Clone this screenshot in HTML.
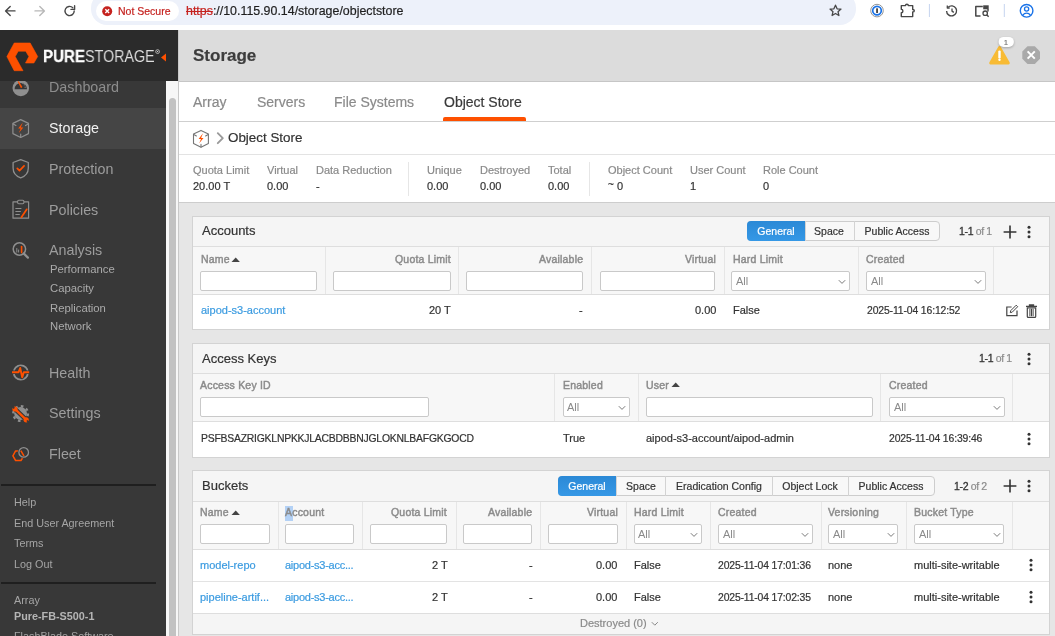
<!DOCTYPE html>
<html><head><meta charset="utf-8"><style>
*{box-sizing:border-box;margin:0;padding:0}
html,body{width:1055px;height:636px;overflow:hidden;-webkit-font-smoothing:antialiased;background:#e6e6e6;font-family:"Liberation Sans",sans-serif;position:relative}
.a{position:absolute}
.t{position:absolute;white-space:nowrap;line-height:1;will-change:transform;-webkit-text-stroke:0.2px currentColor}
svg{position:absolute;overflow:visible}
.inp{position:absolute;background:#fff;border:1px solid #c9c9c9;border-radius:2px}
.sel{position:absolute;background:#fff;border:1px solid #c9c9c9;border-radius:2px}
</style></head><body>
<div class="a" style="left:0px;top:0px;width:1055px;height:30px;background:#fff;"></div>
<div class="a" style="left:91px;top:-8px;width:765px;height:33px;background:#edf1fa;border-radius:16px;"></div>
<div class="a" style="left:96px;top:1px;width:83px;height:20px;background:#fff;border-radius:10px;"></div>
<svg style="left:0;top:0" width="90" height="30"><g fill="none" stroke-linecap="round" stroke-linejoin="round" stroke-width="1.4"><path d="M15 10.9H5.8M10.2 6.4L5.6 10.9l4.6 4.6" stroke="#474747"/><path d="M35 10.9h9.2M39.8 6.4l4.6 4.5-4.6 4.6" stroke="#b8b8b8"/><path d="M74.2 11a4.6 4.6 0 1 1-1.4-3.3" stroke="#474747"/><path d="M74.6 5.8v3.6h-3.6" stroke="#474747"/></g></svg>
<svg style="left:102px;top:6px" width="11" height="11"><circle cx="5.2" cy="5.2" r="5" fill="#c5221f"/><path d="M3.3 3.3l3.8 3.8M7.1 3.3L3.3 7.1" stroke="#fff" stroke-width="1.4"/></svg>
<div class="t" style="top:5.71px;font-size:10.5px;color:#c5221f;left:117.5px;">Not Secure</div>
<div class="t" style="left:186px;top:5.4px;font-size:12.4px;color:#1f1f1f"><span style="color:#c5221f;text-decoration:line-through">https</span>://10.115.90.14/storage/objectstore</div>
<svg style="left:820px;top:0" width="235" height="30" fill="none" stroke-linejoin="round"><path d="M15.5 5.2l1.6 3.6 3.9.3-3 2.6.9 3.8-3.4-2-3.4 2 .9-3.8-3-2.6 3.9-.3z" stroke="#474747" stroke-width="1.3"/><circle cx="57" cy="10.6" r="6.3" fill="#fff" stroke="#8a8a8a" stroke-width="0.9"/><circle cx="57" cy="10.6" r="4.3" fill="#fff" stroke="#1a73e8" stroke-width="1.7"/><rect x="56.3" y="8.2" width="1.5" height="4.9" rx=".4" fill="#1a1a1a"/><path d="M81.3 5.6h4.2a1.4 1.4 0 0 1 2.8 0h4.4v3.9c1.2 0 1.6.6 1.6 1.2s-.4 1.2-1.6 1.2v4.7H81.3v-3.8c1.2 0 1.6-.8 1.6-1.8s-.4-1.8-1.6-1.8z" stroke="#474747" stroke-width="1.4"/><path d="M109.4 4v13" stroke="#c5d4ef" stroke-width="1"/><path d="M126.6 10.9a5 5 0 1 0 1.5-3.6" stroke="#474747" stroke-width="1.4"/><path d="M127.3 5.6v2.4h2.4M132 8.5v2.6l1.8 1.3" stroke="#474747" stroke-width="1.3"/><path d="M160.5 15.9h-4.7V6.4h7" stroke="#474747" stroke-width="1.5"/><rect x="163.2" y="5.3" width="5.5" height="4" fill="#474747"/><path d="M168 9v2.5" stroke="#474747" stroke-width="1.4"/><circle cx="165.2" cy="13.2" r="2.2" stroke="#474747" stroke-width="1.3"/><path d="M166.8 14.8l1.8 1.9" stroke="#474747" stroke-width="1.4"/><path d="M184.3 4v13" stroke="#c5d4ef" stroke-width="1"/><circle cx="206.6" cy="10.8" r="6.3" stroke="#1a73e8" stroke-width="1.4"/><circle cx="206.6" cy="9" r="2.1" stroke="#1a73e8" stroke-width="1.3"/><path d="M202.6 15.4c1.2-1.6 2.4-2.2 4-2.2s2.8.6 4 2.2" stroke="#1a73e8" stroke-width="1.3"/></svg>
<div class="a" style="left:0px;top:81px;width:166px;height:555px;background:#383838;"></div>
<div class="a" style="left:166px;top:81px;width:12px;height:555px;background:#f7f7f7;"></div>
<div class="a" style="left:169px;top:98px;width:7px;height:560px;background:#c2c2c2;border-radius:4px;"></div>
<div class="a" style="left:0px;top:108px;width:166px;height:41px;background:#454545;"></div>
<div class="t" style="top:79.90px;font-size:14.3px;color:#8d8d8d;left:49.3px;-webkit-text-stroke:0;">Dashboard</div>
<div class="t" style="top:121.00px;font-size:14.3px;color:#f2f2f2;left:49.3px;-webkit-text-stroke:0;">Storage</div>
<div class="t" style="top:162.10px;font-size:14.3px;color:#9d9d9d;left:49.3px;-webkit-text-stroke:0;">Protection</div>
<div class="t" style="top:203.20px;font-size:14.3px;color:#9d9d9d;left:49.3px;-webkit-text-stroke:0;">Policies</div>
<div class="t" style="top:243.40px;font-size:14.3px;color:#9d9d9d;left:49.3px;-webkit-text-stroke:0;">Analysis</div>
<div class="t" style="top:365.50px;font-size:14.3px;color:#9d9d9d;left:49.3px;-webkit-text-stroke:0;">Health</div>
<div class="t" style="top:406.40px;font-size:14.3px;color:#9d9d9d;left:49.3px;-webkit-text-stroke:0;">Settings</div>
<div class="t" style="top:447.20px;font-size:14.3px;color:#9d9d9d;left:49.3px;-webkit-text-stroke:0;">Fleet</div>
<div class="t" style="top:264.43px;font-size:11.3px;color:#ababab;left:50.4px;-webkit-text-stroke:0;">Performance</div>
<div class="t" style="top:283.43px;font-size:11.3px;color:#ababab;left:50.4px;-webkit-text-stroke:0;">Capacity</div>
<div class="t" style="top:302.53px;font-size:11.3px;color:#ababab;left:50.4px;-webkit-text-stroke:0;">Replication</div>
<div class="t" style="top:321.43px;font-size:11.3px;color:#ababab;left:50.4px;-webkit-text-stroke:0;">Network</div>
<svg style="left:0;top:0" width="40" height="636" fill="none" stroke-linejoin="round" stroke-linecap="round"><circle cx="20.8" cy="88" r="8.3" fill="#8f8f8f"/><path d="M14.6 89.2a6.2 6.2 0 0 1 12.4 0z" fill="#363636"/><path d="M17.6 81.6l1.2-.3 3.6 5.8-1.4 1.2z" fill="#fe5000"/><circle cx="24.2" cy="84.8" r=".6" fill="#8f8f8f"/><circle cx="22.5" cy="83" r=".6" fill="#8f8f8f"/><path d="M24.8 87.2h1.2" stroke="#8f8f8f" stroke-width=".8"/><path d="M20.7 119.6l7.8 3.8v10.2l-7.8 3.9-7.8-3.9V123.4z" stroke="#8f8f8f" stroke-width="1.2"/><path d="M13.2 124l2.7 1.5M28.2 124l-2.7 1.5M20.7 137v-2.8" stroke="#8f8f8f" stroke-width="1.2"/><path d="M22.8 122.5l-4.6 6h2.5l-1.9 4.4 4.5-5.4h-2.5z" fill="#fe5000"/><path d="M20.7 159.7l7.6 2.8v5.6c0 4.8-3.4 8.4-7.6 9.8-4.2-1.4-7.6-5-7.6-9.8v-5.6z" stroke="#8f8f8f" stroke-width="1.3"/><path d="M17.3 168.4l2.2 2.2 4.6-4.8" stroke="#fe5000" stroke-width="1.7"/><path d="M17.3 201.8h-4.3v16.4h15.6v-16.4h-4.3" stroke="#8f8f8f" stroke-width="1.2"/><rect x="17.6" y="200.2" width="6.3" height="3.6" rx="1.2" stroke="#8f8f8f" stroke-width="1.1"/><path d="M15.8 208.5h5.2M15.8 211.5h4.6M15.8 214.5h3.6" stroke="#8f8f8f" stroke-width="1.1"/><path d="M21.4 217.3l5.4-8" stroke="#fe5000" stroke-width="1.7"/><circle cx="19.4" cy="249" r="6.2" stroke="#8f8f8f" stroke-width="1.5"/><path d="M23.9 253.6l4 4" stroke="#8f8f8f" stroke-width="2.2"/><path d="M16.8 248.5v3.6M18.6 250v2.1" stroke="#8f8f8f" stroke-width="1"/><path d="M21.6 246.6v6" stroke="#fe5000" stroke-width="1.6"/><circle cx="20.8" cy="372.5" r="7.1" stroke="#8f8f8f" stroke-width="1.8"/><path d="M11.8 372.2h6.6l1.6-4.2 2 9.4 1.6-5.2h5.6" stroke="#383838" stroke-width="3.6" stroke-linecap="butt"/><path d="M12 372.2h6.6l1.6-4.2 2 9.4 1.6-5.2h5.4" stroke="#fe5000" stroke-width="1.9" stroke-linecap="butt"/><circle cx="20.6" cy="413.5" r="6.4" fill="#8f8f8f"/><circle cx="20.6" cy="413.5" r="7.4" stroke="#8f8f8f" stroke-width="2.2" stroke-dasharray="2.6 3.21" stroke-linecap="butt"/><path d="M14.6 408.6l12 11.6" stroke="#383838" stroke-width="4.6"/><path d="M15.4 409.4l10.4 10" stroke="#fe5000" stroke-width="2.3"/><circle cx="15" cy="409" r="2.6" fill="#fe5000"/><circle cx="26.2" cy="419.8" r="2.6" fill="#fe5000"/><path d="M14.3 408.3l-2.2-2.2M26.9 420.5l2.2 2.2" stroke="#383838" stroke-width="1.7" stroke-linecap="butt"/><path d="M15.6 450.9h5.4l2.9 5-2.9 4.6h-5.4l-2.7-4.6z" stroke="#fe5000" stroke-width="1.5"/><circle cx="23.7" cy="452.4" r="4.8" stroke="#383838" stroke-width="2.6"/><circle cx="23.7" cy="452.4" r="4.8" stroke="#8f8f8f" stroke-width="1.3"/></svg>
<div class="a" style="left:1px;top:484px;width:155px;height:2px;background:#1f1f1f;"></div>
<div class="a" style="left:1px;top:582px;width:155px;height:2px;background:#1f1f1f;"></div>
<div class="t" style="top:496.76px;font-size:10.8px;color:#a5a5a5;left:13.7px;-webkit-text-stroke:0;">Help</div>
<div class="t" style="top:517.76px;font-size:10.8px;color:#a5a5a5;left:13.7px;-webkit-text-stroke:0;">End User Agreement</div>
<div class="t" style="top:537.96px;font-size:10.8px;color:#a5a5a5;left:13.7px;-webkit-text-stroke:0;">Terms</div>
<div class="t" style="top:558.96px;font-size:10.8px;color:#a5a5a5;left:13.7px;-webkit-text-stroke:0;">Log Out</div>
<div class="t" style="top:594.86px;font-size:10.8px;color:#a5a5a5;left:13.7px;-webkit-text-stroke:0;">Array</div>
<div class="t" style="top:610.86px;font-size:10.8px;color:#b5b5b5;font-weight:bold;left:13.7px;-webkit-text-stroke:0;">Pure-FB-S500-1</div>
<div class="t" style="top:631.36px;font-size:10.8px;color:#a5a5a5;left:13.7px;-webkit-text-stroke:0;">FlashBlade Software</div>
<div class="a" style="left:0px;top:30px;width:178px;height:51px;background:#2b2b2b;"></div>
<svg style="left:0;top:0" width="40" height="80"><path d="M14.2 43H30.2L37.7 56.6L33.9 63H25.5L28.9 56.6L25.7 51.2H18.2L15.2 56.6L23 70.7H14.2L6.9 56.6Z" fill="#fe5000" stroke="#fe5000" stroke-width="0.6" stroke-linejoin="round"/></svg>
<div class="t" style="top:49.08px;font-size:16.8px;color:#ffffff;font-weight:bold;left:42.6px;transform:scaleX(0.9);transform-origin:0 0;-webkit-text-stroke:0.3px #fff;">PURE</div>
<div class="t" style="top:49.08px;font-size:16.8px;color:#dedede;left:85.2px;transform:scaleX(0.852);transform-origin:0 0;-webkit-text-stroke:0;">STORAGE</div>
<svg style="left:155px;top:49px" width="6" height="6"><circle cx="2.6" cy="2.6" r="1.9" fill="none" stroke="#ddd" stroke-width="0.7"/><circle cx="2.6" cy="2.6" r=".7" fill="#ddd"/></svg>
<svg style="left:160px;top:53px" width="8" height="10"><path d="M6 0.5v8L1 4.5z" fill="#fe5000"/></svg>
<div class="a" style="left:178px;top:30px;width:877px;height:51px;background:#dcdcdc;"></div>
<div class="a" style="left:178px;top:30px;width:1px;height:606px;background:#c9c9c9;"></div>
<div class="a" style="left:179px;top:81px;width:876px;height:1px;background:#c6c6c6;"></div>
<div class="t" style="top:47.11px;font-size:17px;color:#3d3d3d;font-weight:bold;left:193px;">Storage</div>
<svg style="left:986px;top:34px" width="60" height="34"><path d="M12.4 12.6c.5-.9 1.7-.9 2.2 0l9 15.6c.5.9-.1 2.2-1.1 2.2H4.5c-1 0-1.6-1.3-1.1-2.2z" fill="#f8bb34"/><path d="M13.5 17.6v5.6" stroke="#fff" stroke-width="2.4" stroke-linecap="round"/><circle cx="13.5" cy="25.8" r="1.2" fill="#fff"/><rect x="12.6" y="2.9" width="15.3" height="10" rx="5" fill="#fff" style="filter:drop-shadow(0 1px 1px rgba(0,0,0,.25))"/><path d="M41.5 12.2h7.3l5.2 5.2v7.4l-5.2 5.2h-7.3l-5.2-5.2v-7.4z" fill="#a9a9a9"/><path d="M41.6 17.4l7.2 7.2M48.8 17.4l-7.2 7.2" stroke="#fff" stroke-width="2"/></svg>
<div class="t" style="top:39.07px;font-size:7px;color:#777;left:1006.2px;transform:translateX(-50%);">1</div>
<div class="a" style="left:179px;top:82px;width:876px;height:39px;background:#fff;"></div>
<div class="a" style="left:179px;top:121px;width:876px;height:1px;background:#cfcfcf;"></div>
<div class="t" style="top:94.55px;font-size:14px;color:#8a8a8a;left:193px;">Array</div>
<div class="t" style="top:94.55px;font-size:14px;color:#8a8a8a;left:256.7px;">Servers</div>
<div class="t" style="top:94.55px;font-size:14px;color:#8a8a8a;left:334px;">File Systems</div>
<div class="t" style="top:94.55px;font-size:14px;color:#3a3a3a;left:444px;">Object Store</div>
<div class="a" style="left:443px;top:117px;width:83px;height:4px;background:#fe5000;border-radius:2px 2px 0 0;"></div>
<div class="a" style="left:179px;top:122px;width:876px;height:32px;background:#fff;"></div>
<div class="a" style="left:179px;top:154px;width:876px;height:1px;background:#e3e3e3;"></div>
<svg style="left:0;top:0" width="240" height="160" fill="none" stroke-linejoin="round" stroke-linecap="round"><path d="M201 130.4l7.4 3.6v9.6l-7.4 3.7-7.5-3.7V134z" stroke="#767676" stroke-width="1.1"/><path d="M193.8 134.6l2.6 1.4M208.2 134.6l-2.6 1.4M201 147v-2.6" stroke="#767676" stroke-width="1.1"/><path d="M203 133.3l-4.4 5.7h2.4l-1.8 4.2 4.3-5.2h-2.4z" fill="#fe5000"/><path d="M217.8 133.2l5 5-5 5" stroke="#9a9a9a" stroke-width="1.9"/></svg>
<div class="t" style="top:131.16px;font-size:13.4px;color:#333;left:228px;">Object Store</div>
<div class="a" style="left:179px;top:155px;width:876px;height:47px;background:#fff;"></div>
<div class="a" style="left:179px;top:202px;width:876px;height:1px;background:#cdcdcd;"></div>
<div class="a" style="left:407.5px;top:162px;width:1px;height:34px;background:#e6e6e6;"></div>
<div class="a" style="left:588.5px;top:162px;width:1px;height:34px;background:#e6e6e6;"></div>
<div class="t" style="top:164.99px;font-size:11px;color:#8a8a8a;left:193px;">Quota Limit</div>
<div class="t" style="top:180.99px;font-size:11px;color:#333;left:193px;">20.00 T</div>
<div class="t" style="top:164.99px;font-size:11px;color:#8a8a8a;left:266.7px;">Virtual</div>
<div class="t" style="top:180.99px;font-size:11px;color:#333;left:266.7px;">0.00</div>
<div class="t" style="top:164.99px;font-size:11px;color:#8a8a8a;left:315.5px;">Data Reduction</div>
<div class="t" style="top:180.99px;font-size:11px;color:#333;left:315.5px;">-</div>
<div class="t" style="top:164.99px;font-size:11px;color:#8a8a8a;left:426.6px;">Unique</div>
<div class="t" style="top:180.99px;font-size:11px;color:#333;left:426.6px;">0.00</div>
<div class="t" style="top:164.99px;font-size:11px;color:#8a8a8a;left:479.6px;">Destroyed</div>
<div class="t" style="top:180.99px;font-size:11px;color:#333;left:479.6px;">0.00</div>
<div class="t" style="top:164.99px;font-size:11px;color:#8a8a8a;left:547.9px;">Total</div>
<div class="t" style="top:180.99px;font-size:11px;color:#333;left:547.9px;">0.00</div>
<div class="t" style="top:164.99px;font-size:11px;color:#8a8a8a;left:607.8px;">Object Count</div>
<div class="t" style="top:180.99px;font-size:11px;color:#333;left:607.8px;"><span style="position:relative;top:-2.5px;font-size:10px">~</span> 0</div>
<div class="t" style="top:164.99px;font-size:11px;color:#8a8a8a;left:690.3px;">User Count</div>
<div class="t" style="top:180.99px;font-size:11px;color:#333;left:690.3px;">1</div>
<div class="t" style="top:164.99px;font-size:11px;color:#8a8a8a;left:762.8px;">Role Count</div>
<div class="t" style="top:180.99px;font-size:11px;color:#333;left:762.8px;">0</div>
<div class="a" style="left:192px;top:216px;width:858px;height:114px;background:#fff;border:1px solid #d3d3d3"></div>
<div class="a" style="left:193px;top:217px;width:856px;height:29px;background:#f5f5f5;"></div>
<div class="a" style="left:193px;top:246px;width:856px;height:1px;background:#dedede;"></div>
<div class="t" style="top:224.20px;font-size:13px;color:#333;left:202px;">Accounts</div>
<div class="a" style="left:747px;top:221px;width:192.5px;height:20px;background:#f8f8f8;border:1px solid #cdcdcd;border-radius:4px"></div>
<div class="a" style="left:747px;top:221px;width:58px;height:20px;background:linear-gradient(#2b89d6,#3598e6);border-radius:4px 0 0 4px"></div>
<div class="t" style="top:225.51px;font-size:10.5px;color:#fff;left:776.0px;transform:translateX(-50%);">General</div>
<div class="a" style="left:805px;top:221px;width:1px;height:20px;background:#d3d3d3"></div>
<div class="t" style="top:225.51px;font-size:10.5px;color:#333;left:829.25px;transform:translateX(-50%);">Space</div>
<div class="a" style="left:853.5px;top:221px;width:1px;height:20px;background:#d3d3d3"></div>
<div class="t" style="top:225.51px;font-size:10.5px;color:#333;left:896.5px;transform:translateX(-50%);">Public Access</div>
<div class="t" style="left:959px;top:225.61px;font-size:10.5px;color:#8a8a8a;letter-spacing:-0.35px"><span style="color:#333;-webkit-text-stroke:0.3px #333">1-1</span> of 1</div>
<svg style="left:1002.5px;top:224.5px" width="14" height="14"><path d="M7 0.6v12.8M0.6 7h12.8" stroke="#333" stroke-width="1.6"/></svg>
<svg style="left:1026.4px;top:224.5px" width="6" height="14"><circle cx="3" cy="2.2" r="1.5" fill="#333"/><circle cx="3" cy="7" r="1.5" fill="#333"/><circle cx="3" cy="11.8" r="1.5" fill="#333"/></svg>
<div class="a" style="left:193px;top:247px;width:856px;height:47px;background:#f7f7f7;"></div>
<div class="a" style="left:193px;top:294px;width:856px;height:1px;background:#dedede;"></div>
<div class="a" style="left:325px;top:247px;width:1px;height:47px;background:#e6e6e6;"></div>
<div class="a" style="left:458px;top:247px;width:1px;height:47px;background:#e6e6e6;"></div>
<div class="a" style="left:591px;top:247px;width:1px;height:47px;background:#e6e6e6;"></div>
<div class="a" style="left:724px;top:247px;width:1px;height:47px;background:#e6e6e6;"></div>
<div class="a" style="left:858px;top:247px;width:1px;height:47px;background:#e6e6e6;"></div>
<div class="a" style="left:993px;top:247px;width:1px;height:47px;background:#e6e6e6;"></div>
<div class="t" style="top:254.11px;font-size:10.5px;color:#8b8b8b;letter-spacing:0.2px;left:200.6px;-webkit-text-stroke:0.45px #8b8b8b;">Name</div>
<svg style="left:231px;top:256.5px" width="10" height="6"><path d="M0.5 5h8.4L4.7 0.5z" fill="#444"/></svg>
<div class="t" style="top:254.11px;font-size:10.5px;color:#8b8b8b;letter-spacing:0.2px;right:604px;-webkit-text-stroke:0.45px #8b8b8b;">Quota Limit</div>
<div class="t" style="top:254.11px;font-size:10.5px;color:#8b8b8b;letter-spacing:0.2px;right:472px;-webkit-text-stroke:0.45px #8b8b8b;">Available</div>
<div class="t" style="top:254.11px;font-size:10.5px;color:#8b8b8b;letter-spacing:0.2px;right:339px;-webkit-text-stroke:0.45px #8b8b8b;">Virtual</div>
<div class="t" style="top:254.11px;font-size:10.5px;color:#8b8b8b;letter-spacing:0.2px;left:733px;-webkit-text-stroke:0.45px #8b8b8b;">Hard Limit</div>
<div class="t" style="top:254.11px;font-size:10.5px;color:#8b8b8b;letter-spacing:0.2px;left:866px;-webkit-text-stroke:0.45px #8b8b8b;">Created</div>
<div class="inp" style="left:200.4px;top:271px;width:116.29999999999998px;height:20px"></div>
<div class="inp" style="left:332.7px;top:271px;width:117.90000000000003px;height:20px"></div>
<div class="inp" style="left:466px;top:271px;width:116.70000000000005px;height:20px"></div>
<div class="inp" style="left:599.5px;top:271px;width:115.79999999999995px;height:20px"></div>
<div class="sel" style="left:731.4px;top:271px;width:119.0px;height:20px"></div>
<div class="t" style="top:275.89px;font-size:11px;color:#8a8a8a;left:735.6999999999999px;-webkit-text-stroke:0;">All</div>
<svg style="left:838.4px;top:278.5px" width="8" height="6"><path d="M0.8 1.2l3.2 3.2 3.2-3.2" fill="none" stroke="#7a7a7a" stroke-width="1"/></svg>
<div class="sel" style="left:866.3px;top:271px;width:120.0px;height:20px"></div>
<div class="t" style="top:275.89px;font-size:11px;color:#8a8a8a;left:870.5999999999999px;-webkit-text-stroke:0;">All</div>
<svg style="left:974.3px;top:278.5px" width="8" height="6"><path d="M0.8 1.2l3.2 3.2 3.2-3.2" fill="none" stroke="#7a7a7a" stroke-width="1"/></svg>
<div class="t" style="top:304.99px;font-size:11px;color:#3b9be0;left:200.5px;">aipod-s3-account</div>
<div class="t" style="top:304.99px;font-size:11px;color:#333;right:604px;">20 T</div>
<div class="t" style="top:304.99px;font-size:11px;color:#333;right:472px;">-</div>
<div class="t" style="top:304.99px;font-size:11px;color:#333;right:339px;">0.00</div>
<div class="t" style="top:304.99px;font-size:11px;color:#333;left:733px;">False</div>
<div class="t" style="top:305.50px;font-size:10.4px;color:#333;letter-spacing:-0.13px;left:866.5px;">2025-11-04 16:12:52</div>
<svg style="left:1000px;top:300px" width="45" height="22" fill="none"><path d="M11.6 7H6.8v8.6h10.2v-5" stroke="#444" stroke-width="1.2"/><path d="M10.3 12.6l.4-1.9 5.5-5.5 1.5 1.5-5.5 5.5z" stroke="#444" stroke-width="1"/><path d="M26 6.3h11M29.5 6.3V5h4v1.3" stroke="#444" stroke-width="1.3"/><path d="M27.3 7.9h8.4v8.6c0 .5-.4.9-.9.9h-6.6c-.5 0-.9-.4-.9-.9z" stroke="#444" stroke-width="1.2"/><path d="M29.9 8.8v7.4M31.5 8.8v7.4M33.1 8.8v7.4" stroke="#444" stroke-width="1"/></svg>
<div class="a" style="left:192px;top:343px;width:858px;height:115px;background:#fff;border:1px solid #d3d3d3"></div>
<div class="a" style="left:193px;top:344px;width:856px;height:29px;background:#f5f5f5;"></div>
<div class="a" style="left:193px;top:373px;width:856px;height:1px;background:#dedede;"></div>
<div class="t" style="top:352.30px;font-size:13px;color:#333;left:202px;">Access Keys</div>
<div class="t" style="left:979px;top:353.41px;font-size:10.5px;color:#8a8a8a;letter-spacing:-0.35px"><span style="color:#333;-webkit-text-stroke:0.3px #333">1-1</span> of 1</div>
<svg style="left:1026.4px;top:352px" width="6" height="14"><circle cx="3" cy="2.2" r="1.5" fill="#333"/><circle cx="3" cy="7" r="1.5" fill="#333"/><circle cx="3" cy="11.8" r="1.5" fill="#333"/></svg>
<div class="a" style="left:193px;top:374px;width:856px;height:47px;background:#f7f7f7;"></div>
<div class="a" style="left:193px;top:421px;width:856px;height:1px;background:#dedede;"></div>
<div class="a" style="left:554px;top:374px;width:1px;height:47px;background:#e6e6e6;"></div>
<div class="a" style="left:638px;top:374px;width:1px;height:47px;background:#e6e6e6;"></div>
<div class="a" style="left:880px;top:374px;width:1px;height:47px;background:#e6e6e6;"></div>
<div class="a" style="left:1012px;top:374px;width:1px;height:47px;background:#e6e6e6;"></div>
<div class="t" style="top:380.01px;font-size:10.5px;color:#8b8b8b;letter-spacing:0.2px;left:200.3px;-webkit-text-stroke:0.45px #8b8b8b;">Access Key ID</div>
<div class="t" style="top:380.01px;font-size:10.5px;color:#8b8b8b;letter-spacing:0.2px;left:562.5px;-webkit-text-stroke:0.45px #8b8b8b;">Enabled</div>
<div class="t" style="top:380.01px;font-size:10.5px;color:#8b8b8b;letter-spacing:0.2px;left:646.4px;-webkit-text-stroke:0.45px #8b8b8b;">User</div>
<svg style="left:671.2px;top:382.4px" width="10" height="6"><path d="M0.5 5h8.4L4.7 0.5z" fill="#444"/></svg>
<div class="t" style="top:380.01px;font-size:10.5px;color:#8b8b8b;letter-spacing:0.2px;left:889.2px;-webkit-text-stroke:0.45px #8b8b8b;">Created</div>
<div class="inp" style="left:200px;top:397px;width:228.8px;height:19.5px"></div>
<div class="sel" style="left:562.5px;top:397px;width:67.89999999999998px;height:19.5px"></div>
<div class="t" style="top:401.89px;font-size:11px;color:#8a8a8a;left:566.8px;-webkit-text-stroke:0;">All</div>
<svg style="left:618.4px;top:404.5px" width="8" height="6"><path d="M0.8 1.2l3.2 3.2 3.2-3.2" fill="none" stroke="#7a7a7a" stroke-width="1"/></svg>
<div class="inp" style="left:646.4px;top:397px;width:226.20000000000005px;height:19.5px"></div>
<div class="sel" style="left:889.2px;top:397px;width:115.5px;height:19.5px"></div>
<div class="t" style="top:401.89px;font-size:11px;color:#8a8a8a;left:893.5px;-webkit-text-stroke:0;">All</div>
<svg style="left:992.7px;top:404.5px" width="8" height="6"><path d="M0.8 1.2l3.2 3.2 3.2-3.2" fill="none" stroke="#7a7a7a" stroke-width="1"/></svg>
<div class="t" style="top:433.50px;font-size:10.4px;color:#333;letter-spacing:-0.22px;left:200.5px;">PSFBSAZRIGKLNPKKJLACBDBBNJGLOKNLBAFGKGOCD</div>
<div class="t" style="top:432.99px;font-size:11px;color:#333;left:562.5px;">True</div>
<div class="t" style="top:432.99px;font-size:11px;color:#333;left:646.4px;">aipod-s3-account/aipod-admin</div>
<div class="t" style="top:433.50px;font-size:10.4px;color:#333;letter-spacing:-0.13px;left:889.2px;">2025-11-04 16:39:46</div>
<svg style="left:1026.4px;top:432.4px" width="6" height="14"><circle cx="3" cy="2.2" r="1.5" fill="#333"/><circle cx="3" cy="7" r="1.5" fill="#333"/><circle cx="3" cy="11.8" r="1.5" fill="#333"/></svg>
<div class="a" style="left:192px;top:470px;width:858px;height:165px;background:#fff;border:1px solid #d3d3d3"></div>
<div class="a" style="left:193px;top:471px;width:856px;height:30px;background:#f5f5f5;"></div>
<div class="a" style="left:193px;top:501px;width:856px;height:1px;background:#dedede;"></div>
<div class="t" style="top:478.90px;font-size:13px;color:#333;left:202px;">Buckets</div>
<div class="a" style="left:558px;top:476px;width:376.5px;height:20px;background:#f8f8f8;border:1px solid #cdcdcd;border-radius:4px"></div>
<div class="a" style="left:558px;top:476px;width:58.299999999999955px;height:20px;background:linear-gradient(#2b89d6,#3598e6);border-radius:4px 0 0 4px"></div>
<div class="t" style="top:480.51px;font-size:10.5px;color:#fff;left:587.15px;transform:translateX(-50%);">General</div>
<div class="a" style="left:616.3px;top:476px;width:1px;height:20px;background:#d3d3d3"></div>
<div class="t" style="top:480.51px;font-size:10.5px;color:#333;left:640.75px;transform:translateX(-50%);">Space</div>
<div class="a" style="left:665.2px;top:476px;width:1px;height:20px;background:#d3d3d3"></div>
<div class="t" style="top:480.51px;font-size:10.5px;color:#333;left:718.75px;transform:translateX(-50%);">Eradication Config</div>
<div class="a" style="left:772.3px;top:476px;width:1px;height:20px;background:#d3d3d3"></div>
<div class="t" style="top:480.51px;font-size:10.5px;color:#333;left:810.3499999999999px;transform:translateX(-50%);">Object Lock</div>
<div class="a" style="left:848.4px;top:476px;width:1px;height:20px;background:#d3d3d3"></div>
<div class="t" style="top:480.51px;font-size:10.5px;color:#333;left:891.45px;transform:translateX(-50%);">Public Access</div>
<div class="t" style="left:954px;top:480.61px;font-size:10.5px;color:#8a8a8a;letter-spacing:-0.35px"><span style="color:#333;-webkit-text-stroke:0.3px #333">1-2</span> of 2</div>
<svg style="left:1002.5px;top:479px" width="14" height="14"><path d="M7 0.6v12.8M0.6 7h12.8" stroke="#333" stroke-width="1.6"/></svg>
<svg style="left:1026px;top:479px" width="6" height="14"><circle cx="3" cy="2.2" r="1.5" fill="#333"/><circle cx="3" cy="7" r="1.5" fill="#333"/><circle cx="3" cy="11.8" r="1.5" fill="#333"/></svg>
<div class="a" style="left:193px;top:502px;width:856px;height:47px;background:#f7f7f7;"></div>
<div class="a" style="left:193px;top:549px;width:856px;height:1px;background:#dedede;"></div>
<div class="a" style="left:277.5px;top:502px;width:1px;height:47px;background:#e6e6e6;"></div>
<div class="a" style="left:362.3px;top:502px;width:1px;height:47px;background:#e6e6e6;"></div>
<div class="a" style="left:455.5px;top:502px;width:1px;height:47px;background:#e6e6e6;"></div>
<div class="a" style="left:540.4px;top:502px;width:1px;height:47px;background:#e6e6e6;"></div>
<div class="a" style="left:625.7px;top:502px;width:1px;height:47px;background:#e6e6e6;"></div>
<div class="a" style="left:710px;top:502px;width:1px;height:47px;background:#e6e6e6;"></div>
<div class="a" style="left:820.5px;top:502px;width:1px;height:47px;background:#e6e6e6;"></div>
<div class="a" style="left:906.3px;top:502px;width:1px;height:47px;background:#e6e6e6;"></div>
<div class="a" style="left:1012.2px;top:502px;width:1px;height:47px;background:#e6e6e6;"></div>
<div class="a" style="left:285.2px;top:505.5px;width:7.7px;height:15px;background:#b3d1f5;"></div>
<div class="t" style="top:507.41px;font-size:10.5px;color:#8b8b8b;letter-spacing:0.2px;left:200.2px;-webkit-text-stroke:0.45px #8b8b8b;">Name</div>
<svg style="left:231px;top:509.79999999999995px" width="10" height="6"><path d="M0.5 5h8.4L4.7 0.5z" fill="#444"/></svg>
<div class="t" style="top:507.41px;font-size:10.5px;color:#8b8b8b;letter-spacing:0.2px;left:285.2px;-webkit-text-stroke:0.45px #8b8b8b;">Account</div>
<div class="t" style="top:507.41px;font-size:10.5px;color:#8b8b8b;letter-spacing:0.2px;right:607.7px;-webkit-text-stroke:0.45px #8b8b8b;">Quota Limit</div>
<div class="t" style="top:507.41px;font-size:10.5px;color:#8b8b8b;letter-spacing:0.2px;right:522.5px;-webkit-text-stroke:0.45px #8b8b8b;">Available</div>
<div class="t" style="top:507.41px;font-size:10.5px;color:#8b8b8b;letter-spacing:0.2px;right:437.20000000000005px;-webkit-text-stroke:0.45px #8b8b8b;">Virtual</div>
<div class="t" style="top:507.41px;font-size:10.5px;color:#8b8b8b;letter-spacing:0.2px;left:633.7px;-webkit-text-stroke:0.45px #8b8b8b;">Hard Limit</div>
<div class="t" style="top:507.41px;font-size:10.5px;color:#8b8b8b;letter-spacing:0.2px;left:718.2px;-webkit-text-stroke:0.45px #8b8b8b;">Created</div>
<div class="t" style="top:507.41px;font-size:10.5px;color:#8b8b8b;letter-spacing:0.2px;left:828.2px;-webkit-text-stroke:0.45px #8b8b8b;">Versioning</div>
<div class="t" style="top:507.41px;font-size:10.5px;color:#8b8b8b;letter-spacing:0.2px;left:914.3px;-webkit-text-stroke:0.45px #8b8b8b;">Bucket Type</div>
<div class="inp" style="left:200px;top:524.3px;width:69.60000000000002px;height:19.700000000000045px"></div>
<div class="inp" style="left:285.2px;top:524.3px;width:69.10000000000002px;height:19.700000000000045px"></div>
<div class="inp" style="left:370px;top:524.3px;width:77.30000000000001px;height:19.700000000000045px"></div>
<div class="inp" style="left:463.4px;top:524.3px;width:69.10000000000002px;height:19.700000000000045px"></div>
<div class="inp" style="left:548.4px;top:524.3px;width:69.39999999999998px;height:19.700000000000045px"></div>
<div class="sel" style="left:633.7px;top:524.3px;width:67.89999999999998px;height:19.700000000000045px"></div>
<div class="t" style="top:529.19px;font-size:11px;color:#8a8a8a;left:638.0px;-webkit-text-stroke:0;">All</div>
<svg style="left:689.6px;top:531.8px" width="8" height="6"><path d="M0.8 1.2l3.2 3.2 3.2-3.2" fill="none" stroke="#7a7a7a" stroke-width="1"/></svg>
<div class="sel" style="left:718.2px;top:524.3px;width:94.5px;height:19.700000000000045px"></div>
<div class="t" style="top:529.19px;font-size:11px;color:#8a8a8a;left:722.5px;-webkit-text-stroke:0;">All</div>
<svg style="left:800.7px;top:531.8px" width="8" height="6"><path d="M0.8 1.2l3.2 3.2 3.2-3.2" fill="none" stroke="#7a7a7a" stroke-width="1"/></svg>
<div class="sel" style="left:828.2px;top:524.3px;width:70.29999999999995px;height:19.700000000000045px"></div>
<div class="t" style="top:529.19px;font-size:11px;color:#8a8a8a;left:832.5px;-webkit-text-stroke:0;">All</div>
<svg style="left:886.5px;top:531.8px" width="8" height="6"><path d="M0.8 1.2l3.2 3.2 3.2-3.2" fill="none" stroke="#7a7a7a" stroke-width="1"/></svg>
<div class="sel" style="left:914.3px;top:524.3px;width:90.20000000000005px;height:19.700000000000045px"></div>
<div class="t" style="top:529.19px;font-size:11px;color:#8a8a8a;left:918.5999999999999px;-webkit-text-stroke:0;">All</div>
<svg style="left:992.5px;top:531.8px" width="8" height="6"><path d="M0.8 1.2l3.2 3.2 3.2-3.2" fill="none" stroke="#7a7a7a" stroke-width="1"/></svg>
<div class="a" style="left:193px;top:581px;width:856px;height:1px;background:#e3e3e3;"></div>
<div class="a" style="left:193px;top:613px;width:856px;height:1px;background:#dedede;"></div>
<div class="a" style="left:193px;top:614px;width:856px;height:20px;background:#f5f5f5;"></div>
<div class="t" style="top:559.99px;font-size:11px;color:#3b9be0;left:200.2px;">model-repo</div>
<div class="t" style="top:559.99px;font-size:11px;color:#3b9be0;letter-spacing:-0.25px;left:284.7px;">aipod-s3-acc...</div>
<div class="t" style="top:559.99px;font-size:11px;color:#333;right:607px;">2 T</div>
<div class="t" style="top:559.99px;font-size:11px;color:#333;right:522.5px;">-</div>
<div class="t" style="top:559.99px;font-size:11px;color:#333;right:437.20000000000005px;">0.00</div>
<div class="t" style="top:559.99px;font-size:11px;color:#333;left:633.7px;">False</div>
<div class="t" style="top:560.50px;font-size:10.4px;color:#333;letter-spacing:-0.15px;left:718.2px;">2025-11-04 17:01:36</div>
<div class="t" style="top:559.99px;font-size:11px;color:#333;left:828.2px;">none</div>
<div class="t" style="top:559.99px;font-size:11px;color:#333;left:914.3px;">multi-site-writable</div>
<svg style="left:1028.4px;top:558.3px" width="6" height="14"><circle cx="3" cy="2.2" r="1.5" fill="#333"/><circle cx="3" cy="7" r="1.5" fill="#333"/><circle cx="3" cy="11.8" r="1.5" fill="#333"/></svg>
<div class="t" style="top:591.99px;font-size:11px;color:#3b9be0;left:200.2px;">pipeline-artif...</div>
<div class="t" style="top:591.99px;font-size:11px;color:#3b9be0;letter-spacing:-0.25px;left:284.7px;">aipod-s3-acc...</div>
<div class="t" style="top:591.99px;font-size:11px;color:#333;right:607px;">2 T</div>
<div class="t" style="top:591.99px;font-size:11px;color:#333;right:522.5px;">-</div>
<div class="t" style="top:591.99px;font-size:11px;color:#333;right:437.20000000000005px;">0.00</div>
<div class="t" style="top:591.99px;font-size:11px;color:#333;left:633.7px;">False</div>
<div class="t" style="top:592.50px;font-size:10.4px;color:#333;letter-spacing:-0.15px;left:718.2px;">2025-11-04 17:02:35</div>
<div class="t" style="top:591.99px;font-size:11px;color:#333;left:828.2px;">none</div>
<div class="t" style="top:591.99px;font-size:11px;color:#333;left:914.3px;">multi-site-writable</div>
<svg style="left:1028.4px;top:590.3px" width="6" height="14"><circle cx="3" cy="2.2" r="1.5" fill="#333"/><circle cx="3" cy="7" r="1.5" fill="#333"/><circle cx="3" cy="11.8" r="1.5" fill="#333"/></svg>
<div class="t" style="top:617.99px;font-size:11px;color:#8a8a8a;left:579.5px;">Destroyed (0)</div>
<svg style="left:651px;top:620.5px" width="8" height="6"><path d="M0.8 1.2l3 3 3-3" fill="none" stroke="#888" stroke-width="1"/></svg>
</body></html>
